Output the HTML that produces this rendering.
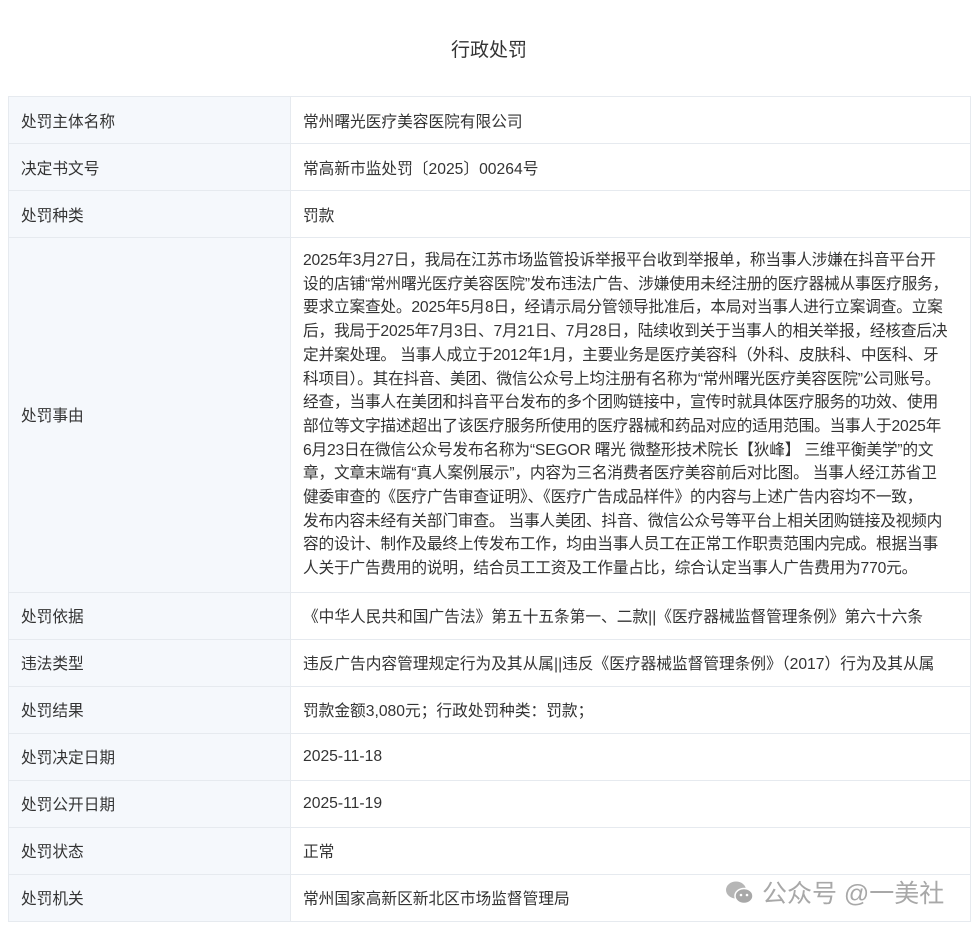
<!DOCTYPE html>
<html><head><meta charset="utf-8"><style>
body{margin:0;background:#fff;font-family:"Liberation Sans","Noto Sans CJK SC",sans-serif;color:#333;}
h1{margin:0;position:absolute;top:35px;left:0;width:978px;text-align:center;font-size:19px;font-weight:normal;color:#333;}
table{position:absolute;top:96px;left:8px;width:963px;border-collapse:collapse;font-size:15.7px;}
td{border:1px solid #e6eaef;height:46px;padding:0 12px;vertical-align:middle;}
td.l{background:#f5f8fc;width:257px;}
td.r{padding:0 4px 0 12px;}
td.reason{line-height:23.7px;padding:11px 4px 11px 12px;white-space:nowrap;letter-spacing:-0.2px;}
.wm{position:absolute;left:725px;top:874px;font-size:25px;color:#999;opacity:.85}
</style></head><body>
<h1>行政处罚</h1>
<table>
<tr><td class="l">处罚主体名称</td><td class="r">常州曙光医疗美容医院有限公司</td></tr>
<tr><td class="l">决定书文号</td><td class="r">常高新市监处罚〔2025〕00264号</td></tr>
<tr><td class="l">处罚种类</td><td class="r">罚款</td></tr>
<tr><td class="l">处罚事由</td><td class="r reason">2025年3月27日，我局在江苏市场监管投诉举报平台收到举报单，称当事人涉嫌在抖音平台开<br>设的店铺“常州曙光医疗美容医院”发布违法广告、涉嫌使用未经注册的医疗器械从事医疗服务，<br>要求立案查处。2025年5月8日，经请示局分管领导批准后，本局对当事人进行立案调查。立案<br>后，我局于2025年7月3日、7月21日、7月28日，陆续收到关于当事人的相关举报，经核查后决<br>定并案处理。 当事人成立于2012年1月，主要业务是医疗美容科（外科、皮肤科、中医科、牙<br>科项目）。其在抖音、美团、微信公众号上均注册有名称为“常州曙光医疗美容医院”公司账号。<br>经查，当事人在美团和抖音平台发布的多个团购链接中，宣传时就具体医疗服务的功效、使用<br>部位等文字描述超出了该医疗服务所使用的医疗器械和药品对应的适用范围。当事人于2025年<br>6月23日在微信公众号发布名称为“SEGOR 曙光 微整形技术院长【狄峰】 三维平衡美学”的文<br>章，文章末端有“真人案例展示”，内容为三名消费者医疗美容前后对比图。 当事人经江苏省卫<br>健委审查的《医疗广告审查证明》、《医疗广告成品样件》的内容与上述广告内容均不一致，<br>发布内容未经有关部门审查。 当事人美团、抖音、微信公众号等平台上相关团购链接及视频内<br>容的设计、制作及最终上传发布工作，均由当事人员工在正常工作职责范围内完成。根据当事<br>人关于广告费用的说明，结合员工工资及工作量占比，综合认定当事人广告费用为770元。</td></tr>
<tr><td class="l">处罚依据</td><td class="r">《中华人民共和国广告法》第五十五条第一、二款||《医疗器械监督管理条例》第六十六条</td></tr>
<tr><td class="l">违法类型</td><td class="r">违反广告内容管理规定行为及其从属||违反《医疗器械监督管理条例》（2017）行为及其从属</td></tr>
<tr><td class="l">处罚结果</td><td class="r">罚款金额3,080元；行政处罚种类：罚款；</td></tr>
<tr><td class="l">处罚决定日期</td><td class="r">2025-11-18</td></tr>
<tr><td class="l">处罚公开日期</td><td class="r">2025-11-19</td></tr>
<tr><td class="l">处罚状态</td><td class="r">正常</td></tr>
<tr><td class="l">处罚机关</td><td class="r">常州国家高新区新北区市场监督管理局</td></tr>
</table>
<div class="wm"><svg width="30" height="26" viewBox="0 0 30 26" style="vertical-align:-4px"><ellipse cx="11" cy="10" rx="10" ry="8.5" fill="#aaa"/><ellipse cx="19" cy="16" rx="9" ry="7.5" fill="#999" stroke="#fff" stroke-width="1.5"/><circle cx="16" cy="15" r="1.3" fill="#fff"/><circle cx="22" cy="15" r="1.3" fill="#fff"/></svg> 公众号 @一美社</div>
</body></html>
